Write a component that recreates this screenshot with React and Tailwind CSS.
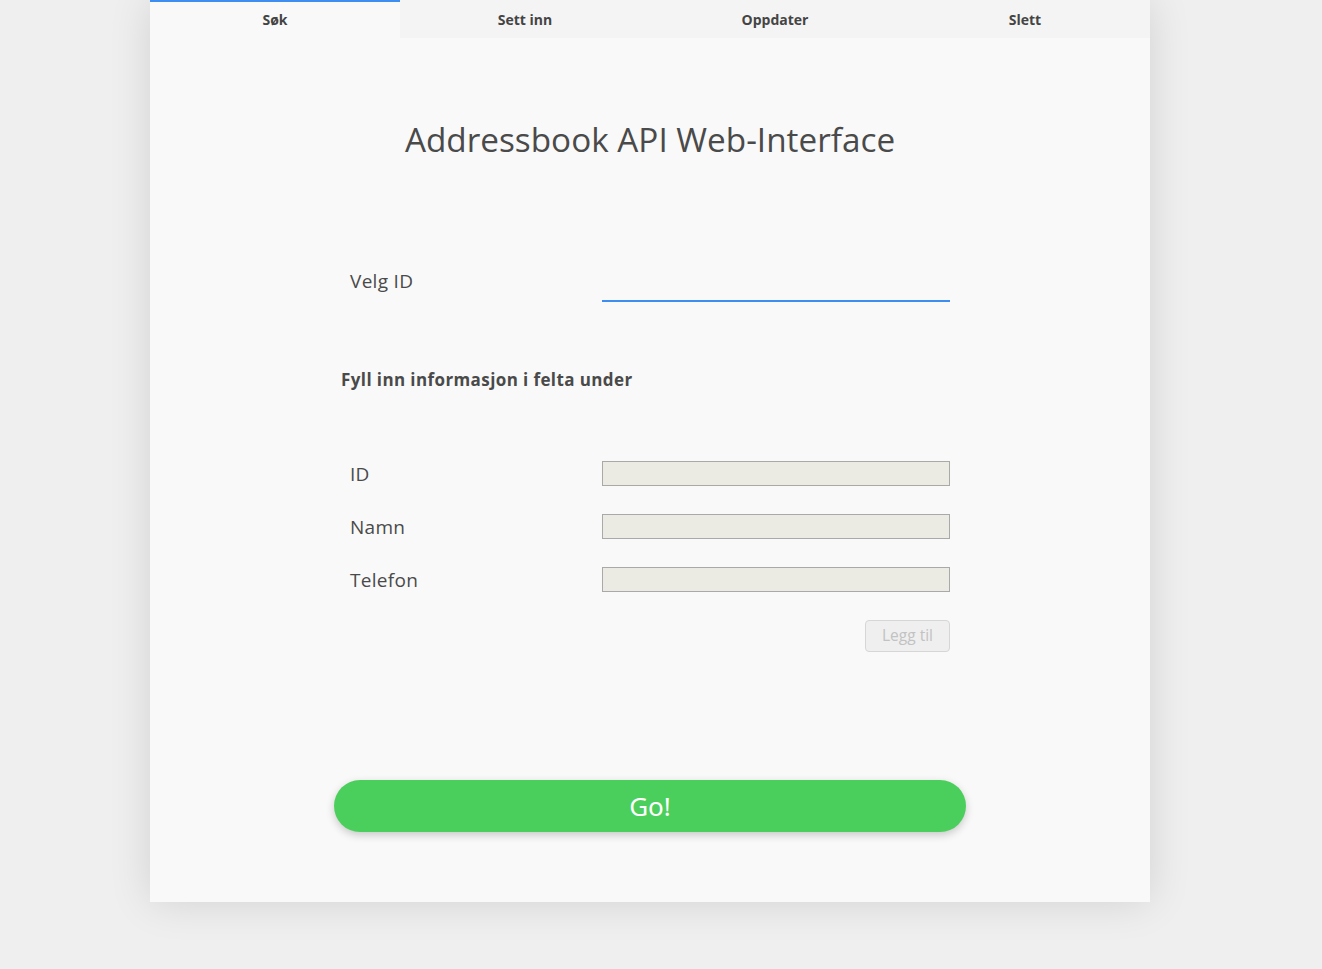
import { useState } from "react";

const tabs = ["Søk", "Sett inn", "Oppdater", "Slett"];

export default function App() {
  const [active, setActive] = useState(0);

  return (
    <div className="min-h-[969px] bg-[#efefef] font-['Open_Sans',sans-serif]">
      <div className="ml-[150px] w-[1000px] bg-[#f9f9f9] shadow-[0_0_40px_rgba(0,0,0,0.12)] pb-[70px]">
        {/* TABS */}
        <div className="flex h-[38px]">
          {tabs.map((t, i) => (
            <button
              key={t}
              onClick={() => setActive(i)}
              className={
                i === active
                  ? "flex-1 border-t-2 border-[#3d8ef0] bg-[#f9f9f9] text-[14px] font-bold text-[#444] pb-[2px]"
                  : "flex-1 border-t-2 border-transparent bg-[#f4f4f4] text-[14px] font-bold text-[#444] pb-[2px]"
              }
            >
              {t}
            </button>
          ))}
        </div>

        {/* TITLE */}
        <h1 className="mt-[80px] h-[42px] text-center text-[33.3px] leading-[42px] text-[#4a4a4a]">
          Addressbook API Web-Interface
        </h1>

        {/* FORM */}
        <div className="mx-auto w-[600px] flex flex-col text-[#4a4a4a]">
          <div className="mt-[110px] flex items-start justify-between">
            <span className="text-[19px] leading-[22px] tracking-[0.3px]">Velg ID</span>
            <input className="h-[32px] w-[348px] border-b-2 border-[#3d8ef0] bg-transparent outline-none" />
          </div>

          <p className="mt-[67px] -ml-[9px] text-[17px] font-bold leading-[22px] tracking-[0.4px]">
            Fyll inn informasjon i felta under
          </p>

          {["ID", "Namn", "Telefon"].map((label, i) => (
            <div
              key={label}
              className={
                i === 0
                  ? "mt-[70px] flex items-center justify-between"
                  : "mt-[28px] flex items-center justify-between"
              }
            >
              <span className="text-[19px] leading-[22px] tracking-[0.3px]">{label}</span>
              <input
                disabled
                className="h-[25px] w-[348px] border border-[#a9a9a9] bg-[#ebeae3]"
              />
            </div>
          ))}

          <button
            disabled
            className="mt-[28px] self-end h-[32px] w-[85px] rounded-[4px] border border-[#d6d6d6] bg-[#efefef] text-[15.5px] text-[#c2c2c2]"
          >
            Legg til
          </button>
        </div>

        {/* GO */}
        <button className="mx-auto mt-[128px] block h-[52px] w-[632px] rounded-full bg-[#4bcf5c] font-['Noto_Sans',sans-serif] text-[26px] text-white shadow-[0_3px_8px_rgba(0,0,0,0.2)]">
          Go!
        </button>
      </div>
    </div>
  );
}
